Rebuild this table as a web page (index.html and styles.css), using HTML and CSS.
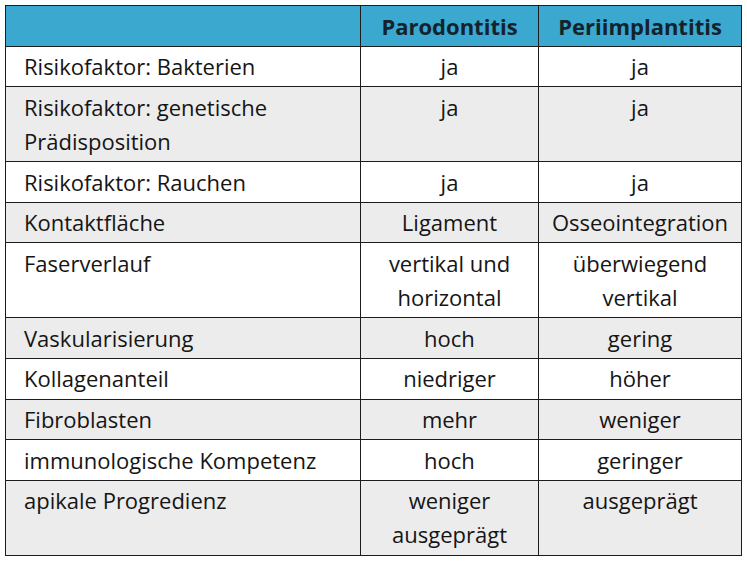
FILE: index.html
```html
<!DOCTYPE html>
<html lang="de">
<head>
<meta charset="utf-8">
<link rel="stylesheet" href="styles.css">
</head>
<body>
<table class="cmp">
  <colgroup>
    <col class="c1"><col class="c2"><col class="c3">
  </colgroup>
  <thead>
    <tr><th></th><th>Parodontitis</th><th>Periimplantitis</th></tr>
  </thead>
  <tbody>
    <tr><td>Risikofaktor: Bakterien</td><td>ja</td><td>ja</td></tr>
    <tr><td>Risikofaktor: genetische<br>Prädisposition</td><td>ja</td><td>ja</td></tr>
    <tr><td>Risikofaktor: Rauchen</td><td>ja</td><td>ja</td></tr>
    <tr><td>Kontaktfläche</td><td>Ligament</td><td>Osseointegration</td></tr>
    <tr><td>Faserverlauf</td><td>vertikal und<br>horizontal</td><td>überwiegend<br>vertikal</td></tr>
    <tr><td>Vaskularisierung</td><td>hoch</td><td>gering</td></tr>
    <tr><td>Kollagenanteil</td><td>niedriger</td><td>höher</td></tr>
    <tr><td>Fibroblasten</td><td>mehr</td><td>weniger</td></tr>
    <tr><td>immunologische Kompetenz</td><td>hoch</td><td>geringer</td></tr>
    <tr><td>apikale Progredienz</td><td>weniger<br>ausgeprägt</td><td>ausgeprägt</td></tr>
  </tbody>
</table>
</body>
</html>
```
FILE: styles.css
```css
html, body {
  margin: 0;
  background: #ffffff;
}
body {
  padding: 5px;
  font-family: "Open Sans", "Noto Sans", sans-serif;
  color: #151515;
}
.cmp {
  border-collapse: collapse;
  table-layout: fixed;
  width: 736px;
  font-size: 22px;
  line-height: 34px;
}
.c1 { width: 355px; }
.c2 { width: 178px; }
.c3 { width: 203px; }
.cmp th, .cmp td {
  border: 1px solid #1c1c1c;
  padding: 2.5px 2px 3.2px;
  vertical-align: top;
  text-align: center;
  white-space: nowrap;
}
.cmp th {
  background: #3aa8cf;
  font-weight: 700;
  color: #14232b;
}
.cmp td:first-child {
  text-align: left;
  padding-left: 18px;
}
.cmp tbody tr:nth-child(even) td {
  background: #ececec;
}
```
